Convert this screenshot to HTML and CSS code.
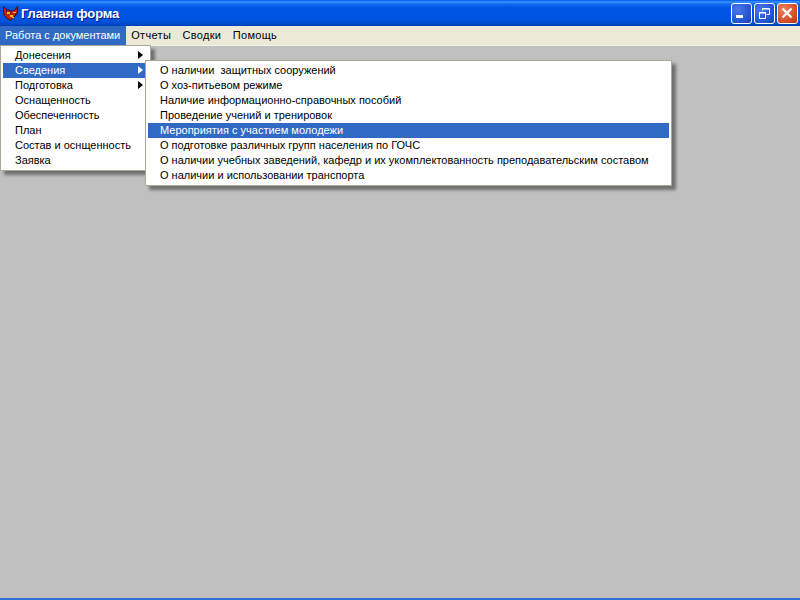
FILE: index.html
```html
<!DOCTYPE html>
<html lang="ru">
<head>
<meta charset="utf-8">
<title>Главная форма</title>
<link rel="stylesheet" href="styles.css">
</head>
<body>
<div class="window">
  <header class="titlebar">
    <svg class="appicon" width="16" height="16" viewBox="0 0 16 16">
      <path d="M0.500 1.500l3 3h1l3 1.500h2l3-1.500 2-3v6l-2 3-2 2-3 3-3-2-3-3-1-3z" fill="#c81e10" stroke="#401008" stroke-width="1"/>
      <path d="M4 7h3v2H4zM10 7h3v1h-3zM7 10h3v2H7zM9 12h2v1H9z" fill="#f0c020"/>
      <path d="M3 5h1v2H3zM12 9h1v2h-1zM7 8h1v1H7z" fill="#201008"/>
    </svg>
    <span class="title">Главная форма</span>
    <div class="controls">
      <button class="ctl blue"><svg width="21" height="21" viewBox="0 0 21 21"><rect x="5" y="12" width="7" height="3" fill="#fff"/></svg></button>
      <button class="ctl blue"><svg width="21" height="21" viewBox="0 0 21 21"><path d="M8.500 7.500v-2h7v6h-3M5.500 9.500h6v6h-6zM8 6h7M5 10h7" fill="none" stroke="#fff"/></svg></button>
      <button class="ctl red"><svg width="21" height="21" viewBox="0 0 21 21"><path d="M5.500 5.500l9 9M14.500 5.500l-9 9" stroke="#fff" stroke-width="2.200" fill="none"/></svg></button>
    </div>
  </header>
  <nav class="menubar">
    <span class="top active">Работа с документами</span>
    <span class="top">Отчеты</span>
    <span class="top">Сводки</span>
    <span class="top">Помощь</span>
  </nav>
  <main class="client"></main>
  <div class="bottomline"></div>

  <ul class="menu main-menu">
    <li class="item sub">Донесения</li>
    <li class="item sub sel">Сведения</li>
    <li class="item sub">Подготовка</li>
    <li class="item">Оснащенность</li>
    <li class="item">Обеспеченность</li>
    <li class="item">План</li>
    <li class="item">Состав и оснщенность</li>
    <li class="item">Заявка</li>
  </ul>
  <ul class="menu sub-menu">
    <li class="item">О наличии&nbsp; защитных сооружений</li>
    <li class="item">О хоз-питьевом режиме</li>
    <li class="item">Наличие информационно-справочных пособий</li>
    <li class="item">Проведение учений и тренировок</li>
    <li class="item sel">Мероприятия с участием молодежи</li>
    <li class="item">О подготовке различных групп населения по ГОЧС</li>
    <li class="item">О наличии учебных заведений, кафедр и их укомплектованность преподавательским составом</li>
    <li class="item">О наличии и использовании транспорта</li>
  </ul>
</div>
</body>
</html>
```
FILE: styles.css
```css
* { box-sizing: border-box; }
html, body { margin: 0; height: 100%; }
body { font-family: "Liberation Sans", sans-serif; font-size: 11px; color: #000; background: #c0c0c0; }
.window { position: relative; width: 800px; height: 600px; display: flex; flex-direction: column; overflow: hidden; }
.titlebar {
  height: 26px; flex: none; display: flex; align-items: center; padding: 0 2px 0 3px;
  background: linear-gradient(to bottom, #0058e6 0, #3a93ff 2px, #0f6af0 4px, #0055e5 8px, #0054e3 18px, #0050d8 22px, #0046c0 25px, #003dae 26px);
}
.appicon { flex: none; }
.title { margin-left: 2px; font: bold 13px "Liberation Sans", sans-serif; letter-spacing: -.15px; color: #fff; text-shadow: 1px 1px 0 #0f1089; }
.controls { margin-left: auto; display: flex; gap: 2px; }
.ctl { width: 21px; height: 21px; padding: 0; border: 1px solid #fff; border-radius: 3px; display: block; }
.ctl svg { display: block; margin: -1px; }
.blue { background: radial-gradient(circle at 30% 30%, #4a78e8, #2350d0 70%, #1c3fb4); }
.red { background: radial-gradient(circle at 30% 30%, #e88060, #d8512c 60%, #b5300f); }
.menubar { height: 19px; flex: none; display: flex; background: #ece9d8; }
.top { padding: 0 5px; line-height: 18px; height: 19px; margin-right: 1.5px; letter-spacing: .3px; }
.top.active { background: #316ac5; color: #fff; margin-right: 0; letter-spacing: 0; padding-right: 6px; }
.client { flex: 1; background: #c0c0c0; border-top: 1px solid #f4f3ea; }
.bottomline { height: 2px; flex: none; background: #2f71d8; }
.menu {
  position: absolute; margin: 0; padding: 2px; list-style: none; background: #fff;
  border: 1px solid #aca899; box-shadow: 4px 4px 3px rgba(0, 0, 0, .42);
}
.main-menu { left: 0; top: 45px; width: 151px; height: 126px; }
.sub-menu { left: 145px; top: 60px; width: 527px; height: 126px; }
.item { height: 15px; line-height: 15px; padding-left: 12px; white-space: nowrap; position: relative; }
.sel { background: #316ac5; color: #fff; }
.sub::after {
  content: ""; position: absolute; right: 5px; top: 3px; width: 0; height: 0;
  border-left: 5px solid currentColor; border-top: 4px solid transparent; border-bottom: 4px solid transparent;
}
```
